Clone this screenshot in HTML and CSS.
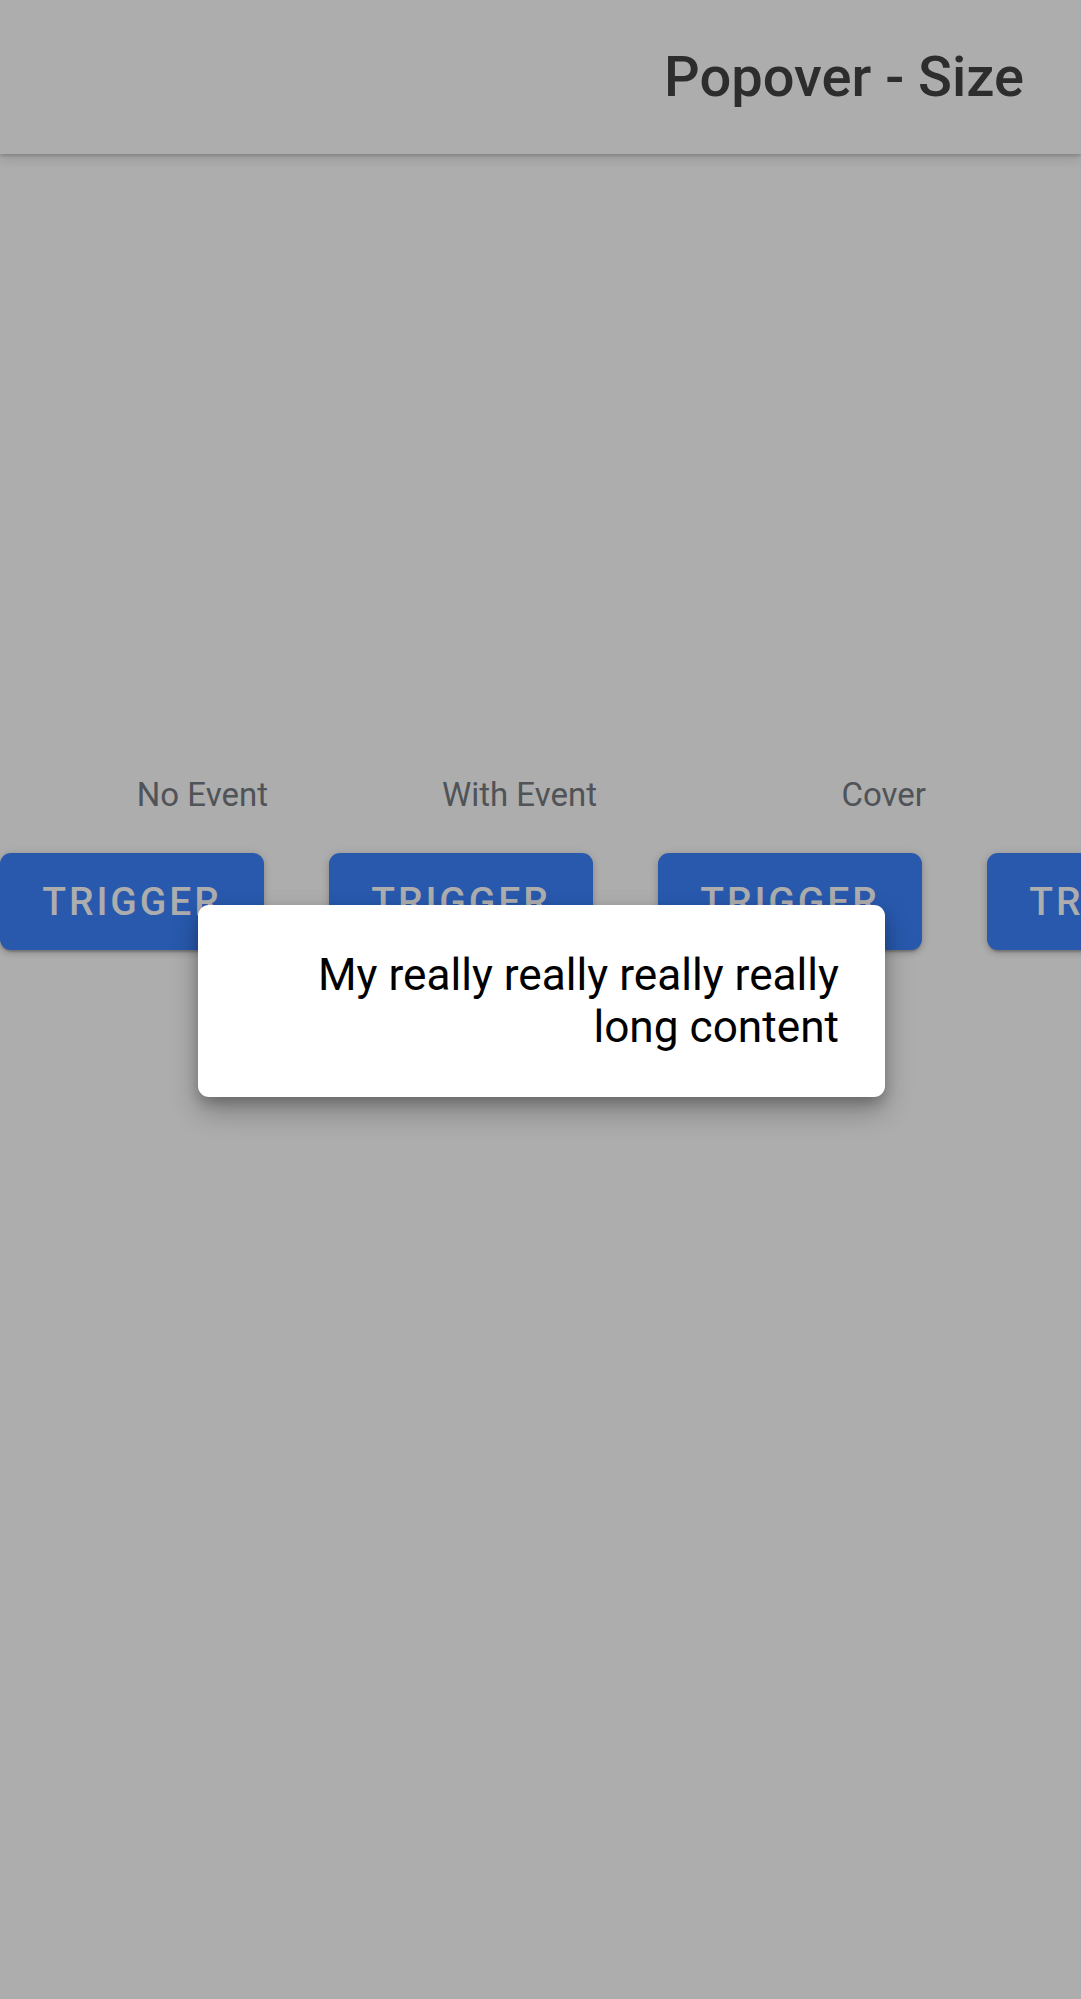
FILE: index.html
```html
<!DOCTYPE html>
<html>
<head>
<meta charset="utf-8">
<link rel="stylesheet" href="styles.css">
</head>
<body>
<header class="toolbar">
  <div class="title">Popover - Size</div>
</header>
<main class="content">
  <div class="grid">
    <div class="col">
      <div class="label">No Event</div>
      <button class="btn">TRIGGER</button>
    </div>
    <div class="col">
      <div class="label">With Event</div>
      <button class="btn">TRIGGER</button>
    </div>
    <div class="col">
      <div class="label">Cover</div>
      <button class="btn">TRIGGER</button>
    </div>
    <div class="col">
      <div class="label">&nbsp;</div>
      <button class="btn">TRIGGER</button>
    </div>
  </div>
</main>
<div class="popover">
  <p class="popover-text">My really really really really long content</p>
</div>
</body>
</html>
```
FILE: styles.css
```css
html, body {
  margin: 0;
  padding: 0;
  overflow: hidden;
}
body {
  width: 1081px;
  height: 1999px;
  background: #adadad;
  font-family: Roboto, "Noto Sans", sans-serif;
  position: relative;
}
.toolbar {
  height: 154px;
  display: flex;
  align-items: center;
  justify-content: flex-end;
  padding-right: 57px;
  box-sizing: border-box;
  background: #adadad;
  box-shadow: 0 2px 3px rgba(0,0,0,0.16), 0 6px 10px rgba(0,0,0,0.10);
  position: relative;
  z-index: 1;
}
.title {
  font-size: 56px;
  font-weight: 500;
  line-height: 66px;
  color: #2d2d2d;
}
.content {
  padding-top: 621px;
}
.grid {
  display: flex;
  gap: 65px;
  width: 1400px;
}
.col {
  width: 264px;
  flex: none;
  display: flex;
  flex-direction: column;
  gap: 38px;
}
.label {
  font-size: 33px;
  line-height: 40px;
  color: #505357;
  text-align: right;
  margin-right: -4px;
}
.btn {
  height: 97px;
  width: 264px;
  border: none;
  border-radius: 11px;
  background: #2859ad;
  color: #adadad;
  font-family: Roboto, "Noto Sans", sans-serif;
  font-size: 39px;
  font-weight: 500;
  letter-spacing: 0.075em;
  padding: 0;
  box-shadow: 0 3px 2px -1px rgba(0,0,0,0.2), 0 3px 6px rgba(0,0,0,0.14), 0 1px 10px rgba(0,0,0,0.1);
}
.popover {
  position: absolute;
  left: 198px;
  top: 905px;
  width: 687px;
  box-sizing: border-box;
  padding: 44px 46px 44px 44px;
  background: #ffffff;
  border-radius: 11px;
  box-shadow: 0 14px 28px rgba(0,0,0,0.28), 0 6px 12px rgba(0,0,0,0.18);
  z-index: 2;
}
.popover-text {
  margin: 0;
  font-size: 44.2px;
  line-height: 52px;
  color: #000000;
  text-align: right;
}
```
